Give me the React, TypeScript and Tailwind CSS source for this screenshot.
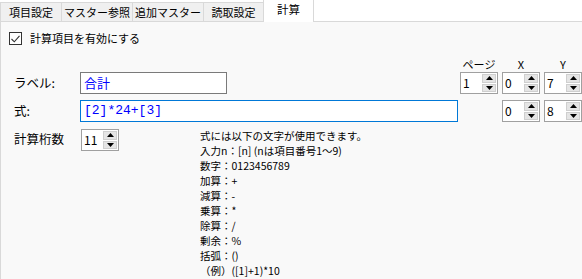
import React from 'react';

const Spinner: React.FC<{ value: string }> = ({ value }) => (
  <div className="w-[38px] h-[22px] border border-[#a0a0a0] bg-white flex items-stretch">
    <span className="flex-1 pl-[2px] text-[12px] leading-[20px] text-black">{value}</span>
    <div className="w-[15px] flex flex-col gap-[1px] py-[1px] pr-[1px]">
      <div className="flex-1 bg-[#e5e5e5] border border-[#cfcfcf] flex items-center justify-center">
        <svg width="7" height="4" viewBox="0 0 7 4"><path d="M3.5 0 L7 4 L0 4 Z" fill="#000" /></svg>
      </div>
      <div className="flex-1 bg-[#e5e5e5] border border-[#cfcfcf] flex items-center justify-center">
        <svg width="7" height="4" viewBox="0 0 7 4"><path d="M0 0 L7 0 L3.5 4 Z" fill="#000" /></svg>
      </div>
    </div>
  </div>
);

const tabs = [
  { label: '項目設定', w: 'w-[61px]' },
  { label: 'マスター参照', w: 'w-[71px]' },
  { label: '追加マスター', w: 'w-[71px]' },
  { label: '読取設定', w: 'w-[60px]' },
];

const helpLines = [
  '式には以下の文字が使用できます。',
  '入力n：[n] (nは項目番号1～9)',
  '数字：0123456789',
  '加算：+',
  '減算：-',
  '乗算：*',
  '除算：/',
  '剰余：%',
  '括弧：()',
  '（例）([1]+1)*10',
];

export default function App() {
  return (
    <div
      className="w-[582px] h-[279px] overflow-hidden bg-white text-black"
      style={{ fontFamily: '"Noto Sans CJK JP", "Noto Sans", sans-serif' }}
    >
      {/* Tabs */}
      <div className="flex items-end h-[22px]">
        {tabs.map(t => (
          <div
            key={t.label}
            className={`${t.w} h-[20px] bg-[#f0f0f0] border-l border-t border-b border-[#d9d9d9] flex items-center justify-center text-[11px] leading-none`}
          >
            {t.label}
          </div>
        ))}
        <div className="w-[51px] h-[22px] bg-white border-l border-r border-[#d9d9d9] flex items-center justify-center text-[11.5px] leading-none pb-[3px]">
          計算
        </div>
        <div className="flex-1 h-[22px] border-b border-[#d9d9d9]" />
      </div>

      {/* Panel */}
      <div className="h-[257px] bg-[#f9f9f9] border-l border-[#d9d9d9] flex flex-col">
        <div className="flex items-center mt-[10px] ml-[8px] h-[13px]">
          <div className="w-[13px] h-[13px] border border-[#333] bg-white flex items-center justify-center">
            <svg width="9" height="8" viewBox="0 0 9 8"><path d="M0.5 4 L3.3 6.8 L8.5 0.8" stroke="#333" strokeWidth="1.1" fill="none" /></svg>
          </div>
          <span className="ml-[8px] text-[11px] leading-none">計算項目を有効にする</span>
        </div>

        <div className="flex mt-[11px]">
          {/* Left column */}
          <div className="w-[459px] pt-[16px] flex flex-col">
            <div className="flex items-center h-[22px]">
              <span className="w-[79px] pl-[13px] text-[12.5px]">ラベル:</span>
              <div className="w-[147px] h-[22px] border border-[#7a7a7a] bg-white pl-[3px] text-[13px] leading-[20px] text-[#0000ff]">合計</div>
            </div>
            <div className="flex items-center h-[22px] mt-[6px]">
              <span className="w-[79px] pl-[13px] text-[12.5px]">式:</span>
              <div
                className="w-[378px] h-[22px] border border-[#0078d7] bg-white pl-[3px] text-[13px] leading-[20px] text-[#0000ff]"
                style={{ fontFamily: '"Liberation Mono", monospace' }}
              >
                [2]*24+[3]
              </div>
            </div>
            <div className="flex items-start mt-[7px]">
              <span className="w-[80px] pl-[13px] text-[12.5px] leading-[20px]">計算桁数</span>
              <Spinner value="11" />
              <div className="ml-[81px] -mt-[1px] text-[10.5px] leading-[15px]">
                {helpLines.map(l => (
                  <div key={l} className="whitespace-pre">{l}</div>
                ))}
              </div>
            </div>
          </div>

          {/* Right column */}
          <div className="flex flex-col ml-[1px]">
            <div className="grid grid-cols-[38px_38px_38px] gap-x-[4px] h-[16px] text-[11px] leading-[16px] text-center">
              <span>ページ</span>
              <span>X</span>
              <span>Y</span>
            </div>
            <div className="grid grid-cols-[38px_38px_38px] gap-x-[4px] gap-y-[6px]">
              <Spinner value="1" />
              <Spinner value="0" />
              <Spinner value="7" />
              <div />
              <Spinner value="0" />
              <Spinner value="8" />
            </div>
          </div>
        </div>
      </div>
    </div>
  );
}
